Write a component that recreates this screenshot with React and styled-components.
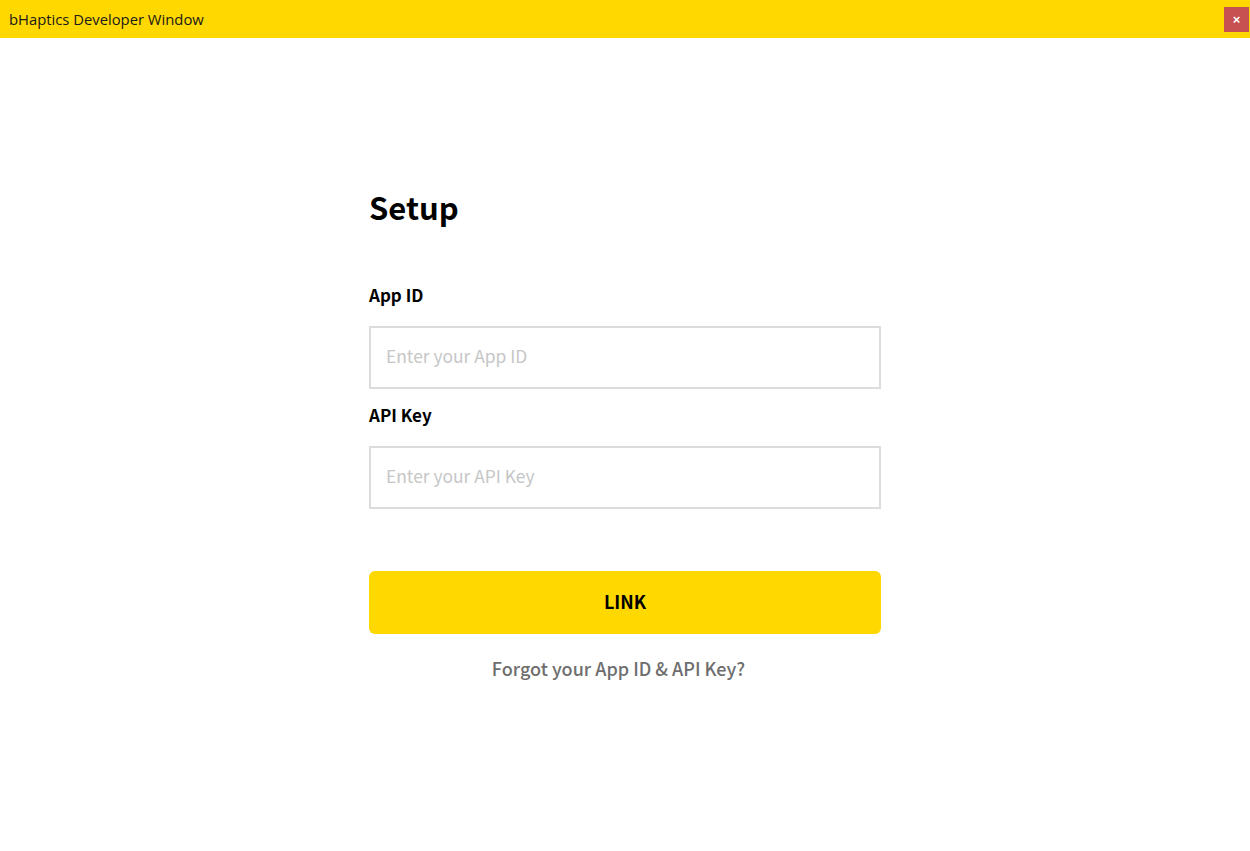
import React from "react"
import styled, { createGlobalStyle } from "styled-components"

const GlobalStyle = createGlobalStyle`
  body {
    margin: 0;
    background: #ffffff;
    font-family: "Noto Sans CJK KR", "Noto Sans", sans-serif;
  }
`

const Window = styled.div`
  width: 1250px;
  height: 851px;
  display: flex;
  flex-direction: column;
  background: #ffffff;
`

const TitleBar = styled.header`
  height: 38px;
  flex-shrink: 0;
  background: #ffd800;
  display: flex;
  align-items: center;
  justify-content: space-between;
  padding: 0 1px 0 9px;
`

const Title = styled.span`
  font-family: "Open Sans", "Liberation Sans", sans-serif;
  font-size: 14.8px;
  color: #1a1a1a;
`

const CloseButton = styled.button`
  width: 25px;
  height: 25px;
  border: none;
  padding: 0;
  background: #c75050;
  color: #ffffff;
  font-family: "Liberation Sans", sans-serif;
  font-size: 13px;
  font-weight: bold;
  display: flex;
  align-items: center;
  justify-content: center;
`

const Content = styled.main`
  width: 512px;
  margin: 0 auto;
  padding-top: 146px;
  display: flex;
  flex-direction: column;
`

const Heading = styled.h1`
  margin: 0 0 53px;
  font-size: 31px;
  font-weight: 700;
  line-height: 45px;
  color: #000000;
`

const Label = styled.label`
  font-size: 17px;
  font-weight: 700;
  line-height: 25px;
  color: #000000;
  margin-bottom: 19px;
`

const Input = styled.input`
  box-sizing: border-box;
  width: 100%;
  height: 63px;
  border: 2px solid #dcdcdc;
  padding: 0 15px 4px;
  font-family: inherit;
  font-size: 17.4px;
  color: #222222;
  outline: none;
  margin-bottom: ${p => p.$gap}px;

  &::placeholder {
    color: #c6c6c6;
  }
`

const LinkButton = styled.button`
  height: 63px;
  border: none;
  border-radius: 6px;
  padding: 0 0 4px;
  background: #ffd800;
  font-family: inherit;
  font-size: 18px;
  font-weight: 700;
  color: #000000;
`

const Forgot = styled.a`
  margin-top: 21px;
  align-self: center;
  margin-right: 13px;
  font-size: 18px;
  line-height: 26px;
  font-weight: 500;
  color: #6e6e6e;
  text-decoration: none;
`

export default function App() {
  return (
    <>
      <GlobalStyle />
      <Window>
        <TitleBar>
          <Title>bHaptics Developer Window</Title>
          <CloseButton aria-label="Close">×</CloseButton>
        </TitleBar>
        <Content>
          <Heading>Setup</Heading>
          <Label>App ID</Label>
          <Input placeholder="Enter your App ID" $gap={13} />
          <Label>API Key</Label>
          <Input placeholder="Enter your API Key" $gap={62} />
          <LinkButton>LINK</LinkButton>
          <Forgot href="#">Forgot your App ID &amp; API Key?</Forgot>
        </Content>
      </Window>
    </>
  )
}
